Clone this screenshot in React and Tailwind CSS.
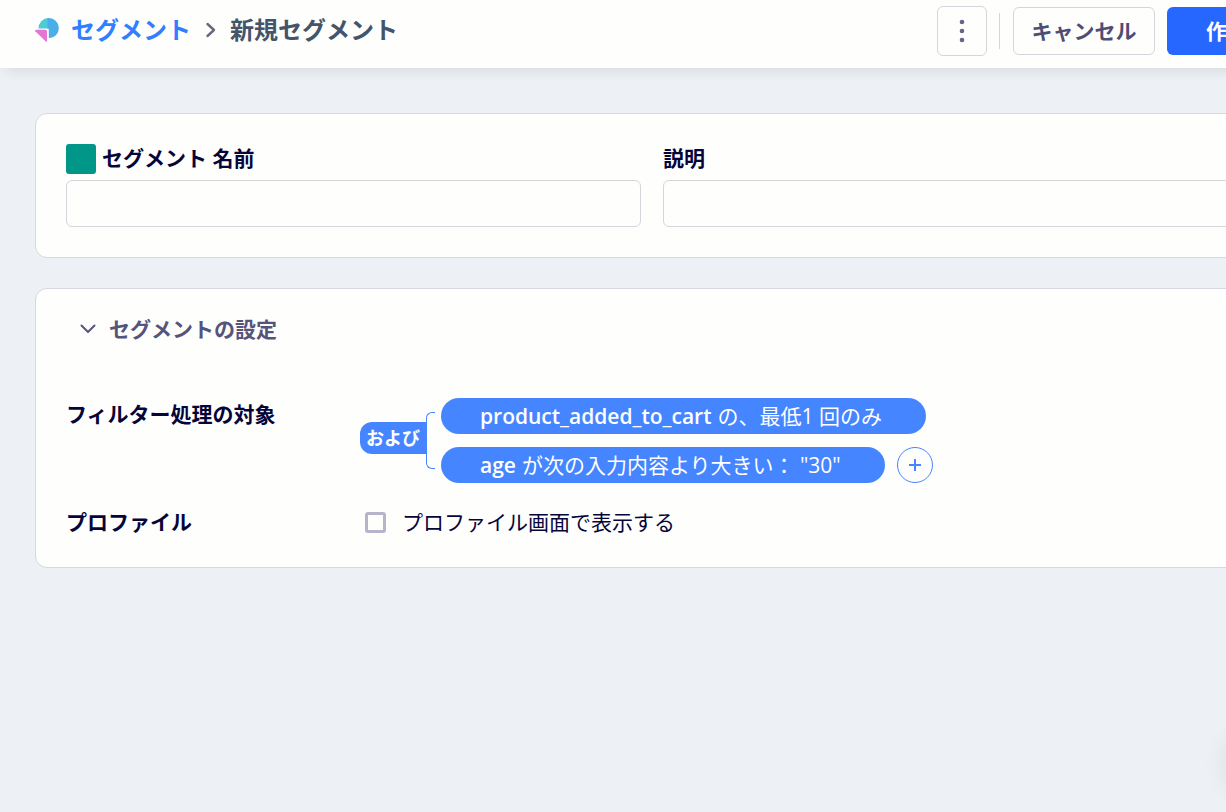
import React, { useState } from "react";

const filters = [
  { name: "product_added_to_cart", text: "の、最低1 回のみ" },
  { name: "age", text: 'が次の入力内容より大きい： "30"' },
];

function Logo() {
  return (
    <svg width="26" height="26" viewBox="0 0 26 26" aria-hidden="true">
      <path d="M4.5 11.500A10.200 10.200 0 0 1 14.500 1v10.500z" fill="#4fcbd8" />
      <path
        d="M14 1h.8a10.100 10.100 0 0 1 0 20.200V12.500q0-1-1-1h-.3V1z"
        fill="#4aaee8"
      />
      <path
        d="M2 12.800h9.500q1.500 0 1.500 1.500v9.700q0 1.500-1.200.4L1.300 14.300q-.8-1.500.7-1.500z"
        fill="#e774d4"
      />
    </svg>
  );
}

function Header() {
  return (
    <header className="relative flex h-[68px] items-start justify-between bg-[#fefefd] pl-[34px] pr-[17px] shadow-[0_8px_12px_-6px_rgba(30,30,40,0.12)]">
      <nav className="flex h-[60px] items-center text-[24px] leading-[32px] font-semibold">
        <Logo />
        <a href="#segments" className="ml-[11px] text-[#307fff]">
          セグメント
        </a>
        <svg
          className="ml-[14px] mr-[13px]"
          width="12"
          height="16"
          viewBox="0 0 12 16"
          fill="none"
          stroke="#666a80"
          strokeWidth="2.4"
          strokeLinecap="round"
          strokeLinejoin="round"
          aria-hidden="true"
        >
          <path d="M2.5 2l6.5 6-6.5 6" />
        </svg>
        <span className="text-[#44546a]">新規セグメント</span>
      </nav>

      <div className="flex h-[62px] items-center gap-3">
        <button
          aria-label="メニュー"
          className="flex size-[50px] items-center justify-center rounded-md border border-[#d5d6dc]"
        >
          <svg width="6" height="24" viewBox="0 0 6 24" fill="#66648a" aria-hidden="true">
            <circle cx="3" cy="3" r="2.3" />
            <circle cx="3" cy="12" r="2.3" />
            <circle cx="3" cy="21" r="2.3" />
          </svg>
        </button>
        <div className="mr-px h-9 w-px bg-[#d5d6dc]" />
        <button className="h-12 min-w-[142px] rounded-md border border-[#d5d6dc] px-4 text-[21px] leading-[30px] font-semibold text-[#4f4d74]">
          キャンセル
        </button>
        <button className="h-12 rounded-md bg-[#2667ff] px-[39px] text-[21px] leading-[30px] font-semibold text-white">
          作成
        </button>
      </div>
    </header>
  );
}

function DetailsCard() {
  const [name, setName] = useState("");
  const [description, setDescription] = useState("");

  return (
    <section className="grid grid-cols-2 gap-x-[22px] rounded-xl border border-[#d5d8de] bg-[#fefefd] p-[30px]">
      <div className="flex flex-col gap-[6px]">
        <div className="flex items-start gap-[6px]">
          <button aria-label="色" className="size-[30px] rounded-[3px] bg-[#009688]" />
          <label htmlFor="name" className="leading-[28px] font-semibold">
            セグメント 名前
          </label>
        </div>
        <input
          id="name"
          value={name}
          onChange={(e) => setName(e.target.value)}
          className="h-[47px] w-full rounded-md border border-[#d5d6dc] px-3"
        />
      </div>
      <div className="flex flex-col gap-2">
        <label htmlFor="description" className="leading-[28px] font-semibold">
          説明
        </label>
        <input
          id="description"
          value={description}
          onChange={(e) => setDescription(e.target.value)}
          className="h-[47px] w-full rounded-md border border-[#d5d6dc] px-3"
        />
      </div>
    </section>
  );
}

function FilterGroup() {
  return (
    <div className="flex items-center">
      <button className="mt-6 h-8 self-start rounded-l-xl bg-[#4585ff] px-[6px] text-[18px] leading-[32px] font-bold text-white">
        および
      </button>
      <div className="h-[57px] w-[9px] rounded-l-md border border-r-0 border-[#4585ff]" />
      <ul className="ml-[6px] flex flex-col gap-[13px]">
        {filters.map((filter, i) => (
          <li key={filter.name} className="flex items-center gap-3">
            <button className="flex h-9 items-center gap-[6px] rounded-full bg-[#4585ff] pl-[39px] pr-11 leading-[36px] text-white">
              <span className="font-semibold">{filter.name}</span>
              <span>{filter.text}</span>
            </button>
            {i === filters.length - 1 && (
              <button
                aria-label="フィルターを追加"
                className="flex size-9 items-center justify-center rounded-full border border-[#4585ff]"
              >
                <svg width="12" height="12" viewBox="0 0 12 12" stroke="#4585ff" strokeWidth="2" aria-hidden="true">
                  <path d="M6 0v12M0 6h12" />
                </svg>
              </button>
            )}
          </li>
        ))}
      </ul>
    </div>
  );
}

function SettingsCard() {
  const [open, setOpen] = useState(true);
  const [showInProfile, setShowInProfile] = useState(false);

  return (
    <section className="rounded-xl border border-[#d5d8de] bg-[#fefefd] px-[30px] pt-[25px] pb-[30px]">
      <button
        aria-expanded={open}
        onClick={() => setOpen(!open)}
        className="flex items-center gap-3 pl-[13px] leading-[30px] font-semibold text-[#55547b]"
      >
        <svg
          width="18"
          height="12"
          viewBox="0 0 18 12"
          fill="none"
          stroke="currentColor"
          strokeWidth="2"
          strokeLinecap="round"
          strokeLinejoin="round"
          aria-hidden="true"
        >
          <path d="M2.5 2.5L9 9l6.500-6.500" />
        </svg>
        セグメントの設定
      </button>

      {open && (
        <div className="mt-[54px] flex flex-col gap-6">
          <div className="flex items-start">
            <h3 className="w-[294px] leading-[32px] font-semibold">フィルター処理の対象</h3>
            <FilterGroup />
          </div>
          <div className="flex items-center">
            <h3 className="w-[299px] leading-[30px] font-semibold">プロファイル</h3>
            <input
              id="profile"
              type="checkbox"
              checked={showInProfile}
              onChange={(e) => setShowInProfile(e.target.checked)}
              className="size-[21px] appearance-none rounded-[3px] border-3 border-[#b5b4c8] checked:bg-[#4585ff]"
            />
            <label htmlFor="profile" className="pl-4 leading-[30px]">
              プロファイル画面で表示する
            </label>
          </div>
        </div>
      )}
    </section>
  );
}

export default function App() {
  return (
    <div className="relative min-h-screen overflow-hidden bg-[#edf1f5] font-['Open_Sans','Noto_Sans_CJK_JP',sans-serif] text-[21px] text-[#06053a]">
      <div className="-mr-[78px]">
        <Header />
        <main className="flex flex-col gap-[30px] px-[35px] pt-[45px] pb-10">
          <DetailsCard />
          <SettingsCard />
        </main>
      </div>
      {/* floating help button, parked past the right edge */}
      <div className="absolute -right-[62px] bottom-[18px] size-[60px] rounded-full shadow-[0_0_24px_4px_rgba(30,30,40,0.08)]" />
    </div>
  );
}
